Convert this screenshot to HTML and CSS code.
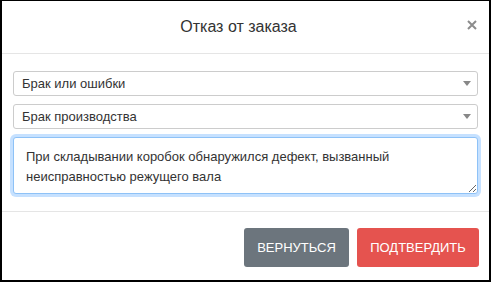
FILE: index.html
```html
<!DOCTYPE html>
<html lang="ru">
  <head>
    <meta charset="utf-8">
    <title>Отказ от заказа</title>
    <link rel="stylesheet" href="styles.css">
  </head>

  <body>
    <div class="modal">
      <div class="modal-header">
        <h3 class="modal-title">Отказ от заказа</h3>
        <button class="close" type="button">
          <svg width="10" height="10" viewBox="0 0 10 10">
            <path d="M1 1 L9 9 M9 1 L1 9" stroke="#8c8c8c" stroke-width="2" />
          </svg>
        </button>
      </div>

      <div class="modal-body">
        <div class="select">Брак или ошибки</div>
        <div class="select">Брак производства</div>
        <textarea class="reason" id="reason">При складывании коробок обнаружился дефект, вызванный неисправностью режущего вала</textarea>
      </div>

      <div class="modal-footer">
        <button class="btn btn-back">Вернуться</button>
        <button class="btn btn-confirm">Подтвердить</button>
      </div>
    </div>

    <script>
      const reason = document.getElementById("reason");
      reason.focus();
      reason.setSelectionRange(reason.value.length, reason.value.length);
    </script>
  </body>
</html>
```

FILE: styles.css
```css
body {
  margin: 0;
  font-family: "Liberation Sans", Arial, sans-serif;
  color: #333;
  background: #fff;
}
.modal {
  box-sizing: border-box;
  width: 491px;
  height: 282px;
  border-top: 1px solid #000;
  border-left: 2px solid #000;
  border-right: 2px solid #000;
  border-bottom: 2px solid #000;
  display: flex;
  flex-direction: column;
}
.modal-header {
  height: 52px;
  border-bottom: 1px solid #e5e5e5;
  display: flex;
  align-items: center;
  justify-content: center;
  position: relative;
}
.modal-title {
  margin: 0 14px 0 0;
  font-size: 16px;
  font-weight: normal;
  color: #333;
}
.close {
  position: absolute;
  right: 12px;
  top: 19px;
  border: none;
  background: none;
  padding: 0;
  width: 10px;
  height: 10px;
  display: flex;
}
.modal-body {
  padding: 17px 11px;
  display: flex;
  flex-direction: column;
  gap: 8px;
}
.select {
  box-sizing: border-box;
  height: 25px;
  border: 1px solid #ccc;
  border-radius: 3px;
  padding: 0 8px;
  font-size: 13px;
  line-height: 23px;
  color: #333;
  position: relative;
}
.select::after {
  content: "";
  position: absolute;
  right: 6px;
  top: 9px;
  border-left: 4px solid transparent;
  border-right: 4px solid transparent;
  border-top: 5px solid #888;
}
.reason {
  box-sizing: border-box;
  width: 100%;
  height: 57px;
  margin: 0;
  border: 1px solid #8ec2f7;
  border-radius: 3px;
  box-shadow: 0 0 0 3px rgba(128, 189, 255, 0.45);
  padding: 9px 12px 4px;
  font-family: "Liberation Sans", Arial, sans-serif;
  font-size: 13px;
  line-height: 20px;
  color: #333;
  caret-color: #000;
  outline: none;
  resize: vertical;
}
.modal-footer {
  border-top: 1px solid #e5e5e5;
  padding: 16px 10px 0;
  display: flex;
  justify-content: flex-end;
  gap: 8px;
}
.btn {
  height: 39px;
  border: none;
  border-radius: 3px;
  color: #fff;
  font-family: "Liberation Sans", Arial, sans-serif;
  font-size: 13px;
  text-transform: uppercase;
  padding: 0 13px;
}
.btn-back {
  width: 105px;
  background: #6c757d;
}
.btn-confirm {
  width: 122px;
  background: #e5534f;
}
```
